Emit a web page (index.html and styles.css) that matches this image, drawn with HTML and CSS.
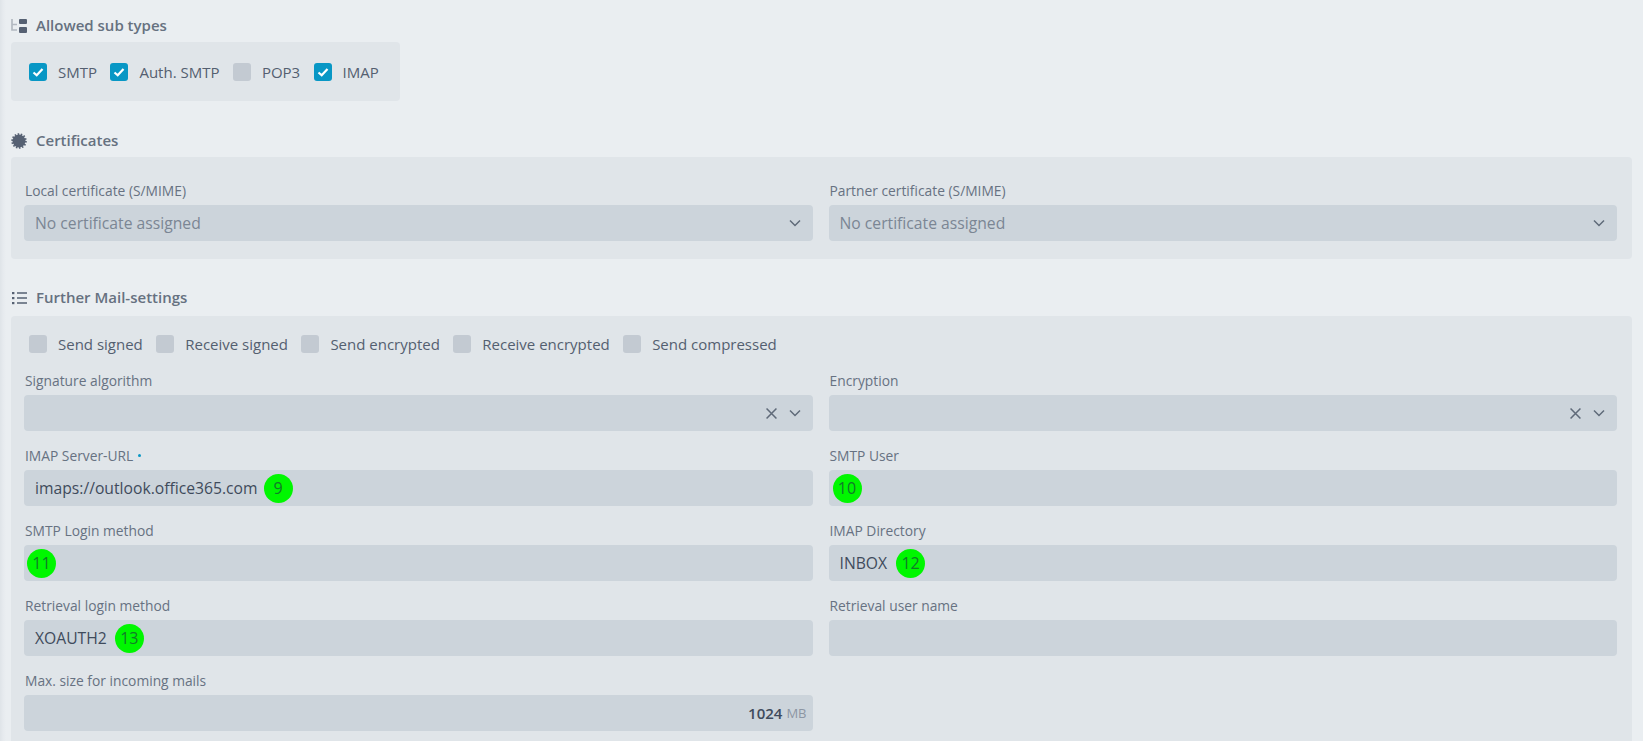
FILE: index.html
```html
<!DOCTYPE html>
<html lang="en">
<head>
<meta charset="utf-8">
<title>Mail settings</title>
<link rel="stylesheet" href="styles.css">
</head>
<body>
<main class="page">
  <section class="section section-types">
    <h2 class="heading">
      <svg class="hicon" viewBox="0 0 16 14"><path class="faint" d="M1 0v11h5M1 5.500h5" fill="none" stroke-width="1.700"/><rect class="solid" x="8" y="0" width="8" height="5" rx="1"/><rect class="solid" x="8" y="8" width="8" height="6" rx="1"/></svg>
      <span>Allowed sub types</span>
    </h2>
    <div class="panel panel-narrow checks">
      <label class="check"><span class="box on"><svg viewBox="0 0 18 18"><path d="M4.500 9.500l3.200 2.800 5.800-6.400" /></svg></span>SMTP</label>
      <label class="check"><span class="box on"><svg viewBox="0 0 18 18"><path d="M4.500 9.500l3.200 2.800 5.800-6.400" /></svg></span>Auth. SMTP</label>
      <label class="check"><span class="box"></span>POP3</label>
      <label class="check"><span class="box on"><svg viewBox="0 0 18 18"><path d="M4.500 9.500l3.200 2.800 5.800-6.400" /></svg></span>IMAP</label>
    </div>
  </section>

  <section class="section">
    <h2 class="heading">
      <svg class="hicon hicon-badge" viewBox="0 0 16 16"><circle class="solid" cx="8" cy="8" r="6.500"/><circle class="teeth" cx="8" cy="8" r="6.900"/></svg>
      <span>Certificates</span>
    </h2>
    <div class="panel form-grid panel-cert">
      <div class="field">
        <label class="label">Local certificate (S/MIME)</label>
        <div class="control placeholder"><span class="value">No certificate assigned</span><svg class="chev" viewBox="0 0 12 8"><path d="M1 1.500l5 5 5-5"/></svg></div>
      </div>
      <div class="field">
        <label class="label">Partner certificate (S/MIME)</label>
        <div class="control placeholder"><span class="value">No certificate assigned</span><svg class="chev" viewBox="0 0 12 8"><path d="M1 1.500l5 5 5-5"/></svg></div>
      </div>
    </div>
  </section>

  <section class="section">
    <h2 class="heading heading-mail">
      <svg class="hicon" viewBox="0 0 16 14"><path class="lines" d="M6 2h10M6 7h10M6 12h10"/><rect class="solid" x="1" y="1" width="2.400" height="2.200"/><rect class="solid" x="1" y="6" width="2.400" height="2.200"/><rect class="solid" x="1" y="11" width="2.400" height="2.200"/></svg>
      <span>Further Mail-settings</span>
    </h2>
    <div class="panel panel-mail">
      <div class="checks checks-mail">
        <label class="check"><span class="box"></span>Send signed</label>
        <label class="check"><span class="box"></span>Receive signed</label>
        <label class="check"><span class="box"></span>Send encrypted</label>
        <label class="check"><span class="box"></span>Receive encrypted</label>
        <label class="check"><span class="box"></span>Send compressed</label>
      </div>
      <div class="form-grid">
        <div class="field">
          <label class="label">Signature algorithm</label>
          <div class="control"><span class="value"></span><svg class="cross" viewBox="0 0 10 10"><path d="M.5.500l9 9M9.500.500l-9 9"/></svg><svg class="chev" viewBox="0 0 12 8"><path d="M1 1.500l5 5 5-5"/></svg></div>
        </div>
        <div class="field">
          <label class="label">Encryption</label>
          <div class="control"><span class="value"></span><svg class="cross" viewBox="0 0 10 10"><path d="M.5.500l9 9M9.500.500l-9 9"/></svg><svg class="chev" viewBox="0 0 12 8"><path d="M1 1.500l5 5 5-5"/></svg></div>
        </div>
        <div class="field">
          <label class="label">IMAP Server-URL <i class="dot"></i></label>
          <div class="control"><span class="value">imaps://outlook.office365.com</span><span class="pin">9</span></div>
        </div>
        <div class="field">
          <label class="label">SMTP User</label>
          <div class="control control-pin control-pin-right"><span class="pin">10</span></div>
        </div>
        <div class="field">
          <label class="label">SMTP Login method</label>
          <div class="control control-pin"><span class="pin">11</span></div>
        </div>
        <div class="field">
          <label class="label">IMAP Directory</label>
          <div class="control"><span class="value">INBOX</span><span class="pin pin-wide">12</span></div>
        </div>
        <div class="field">
          <label class="label">Retrieval login method</label>
          <div class="control"><span class="value">XOAUTH2</span><span class="pin pin-mid">13</span></div>
        </div>
        <div class="field">
          <label class="label">Retrieval user name</label>
          <div class="control"></div>
        </div>
        <div class="field">
          <label class="label">Max. size for incoming mails</label>
          <div class="control control-num"><span class="num">1024</span><span class="unit">MB</span></div>
        </div>
      </div>
    </div>
  </section>
</main>
</body>
</html>
```
FILE: styles.css
```css
* { box-sizing: border-box; }
html, body { margin: 0; height: 100%; overflow: hidden; }
body {
  background: #e9edf1;
  font-family: "Open Sans", "Noto Sans", sans-serif;
  color: #4f5b6b;
  font-size: 14px;
}
.page {
  height: 741px;
  overflow: hidden;
  padding: 17px 11px 0 11px;
  background: linear-gradient(to right, #dfe4e8 0, #e6eaee 3px, #eaeef1 6px);
}
.section { margin-bottom: 30px; }
.section-types { margin-bottom: 31px; }
.heading {
  display: flex;
  align-items: center;
  gap: 9px;
  margin: 0 0 7px;
  height: 18px;
  font-size: 15px;
  font-weight: 600;
  color: #667180;
}
.heading span { padding-bottom: 2px; }
.heading-mail { margin-bottom: 9px; }
.hicon { width: 16px; height: 14px; flex: none; }
.hicon-badge { height: 16px; }
.hicon .solid { fill: #566173; }
.hicon .faint { stroke: #b3b9c1; }
.hicon .lines { stroke: #566173; stroke-width: 1.6; fill: none; }
.hicon .teeth { fill: none; stroke: #566173; stroke-width: 1.800; stroke-dasharray: 1.548 1.548; }
.panel {
  background: #e0e5e9;
  border-radius: 4px;
}
.panel-narrow { width: 389px; height: 59px; }
.checks { display: flex; align-items: center; }
.panel-narrow.checks { padding-left: 18px; }
.check {
  display: flex;
  align-items: center;
  color: #545f70;
  font-size: 15px;
  margin-right: 13.400px;
}
.box {
  width: 18px;
  height: 18px;
  border-radius: 3px;
  background: #c3cad2;
  margin-right: 11px;
  flex: none;
}
.box.on { background: #0897c5; }
.box svg { display: block; width: 18px; height: 18px; }
.box svg path { fill: none; stroke: #fff; stroke-width: 2.200; }
.form-grid {
  display: grid;
  grid-template-columns: 1fr 1fr;
  column-gap: 16px;
  row-gap: 14px;
}
.panel-cert { padding: 23px 15px 18px 13px; height: 102px; }
.panel-mail { padding: 19px 15px 0 13px; height: 500px; }
.checks-mail { padding-left: 5px; height: 18px; margin-bottom: 17px; }
.field { min-width: 0; }
.label {
  display: flex;
  align-items: center;
  gap: 4px;
  height: 25px;
  padding: 0 0 5px 1px;
  font-size: 13.800px;
  font-weight: 500;
  color: #677282;
}
.dot { width: 3px; height: 3px; border-radius: 50%; background: #0897c5; margin-left: 1px; }
.control {
  display: flex;
  align-items: center;
  height: 36px;
  padding: 0 12px 0 11px;
  border-radius: 4px;
  background: #ccd4db;
  color: #3f4b5c;
  font-size: 15.700px;
  font-weight: 500;
}
.control-pin { padding-left: 3px; }
.control-pin-right { padding-left: 4px; }
.control-num { justify-content: flex-end; padding-right: 6px; }
.placeholder { color: #7b8694; }
.value { white-space: nowrap; }
.control .cross { width: 11px; height: 11px; margin-left: auto; }
.cross path { stroke: #5f6a79; stroke-width: 1.400; fill: none; }
.chev { width: 12px; height: 8px; margin-left: 12px; flex: none; }
.placeholder .chev { margin-left: auto; }
.chev path { stroke: #5f6a79; stroke-width: 1.500; fill: none; }
.pin {
  width: 29px;
  height: 29px;
  border-radius: 50%;
  background: #00f700;
  color: #127a2a;
  display: flex;
  align-items: center;
  justify-content: center;
  margin-left: 6px;
  font-size: 16px;
  font-weight: 400;
  flex: none;
}
.pin-wide { margin-left: 9px; }
.pin-mid { margin-left: 8px; }
.control-pin .pin { margin-left: 0; }
.num { font-weight: 600; font-size: 15px; }
.unit { color: #8c96a3; font-size: 13px; font-weight: 400; margin-left: 4px; }
```
